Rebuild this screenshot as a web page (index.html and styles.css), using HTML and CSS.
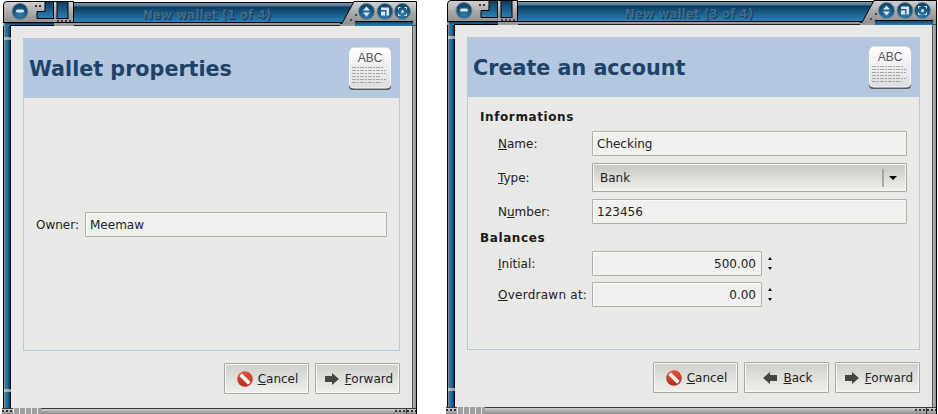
FILE: index.html
```html
<!DOCTYPE html>
<html lang="en">
<head>
    <meta charset="UTF-8">
    <meta name="viewport" content="width=device-width, initial-scale=1.0">
    <title>New wallet</title>
    <link rel="stylesheet" href="styles.css">
</head>
<body>
    <!-- Shared drawings: window corners, button icons, document icon -->
    <svg class="defs" aria-hidden="true">
        <defs>
            <linearGradient id="metal" x1="0" y1="0" x2="0" y2="1">
                <stop offset="0" stop-color="#d2d2d2"/>
                <stop offset="0.5" stop-color="#a6a6a6"/>
                <stop offset="1" stop-color="#8a8a8a"/>
            </linearGradient>
            <linearGradient id="steel" x1="0" y1="0" x2="0" y2="1">
                <stop offset="0" stop-color="#0b3a5e"/>
                <stop offset="1" stop-color="#2a82b8"/>
            </linearGradient>
            <radialGradient id="knob" cx="0.5" cy="0.75" r="0.8">
                <stop offset="0" stop-color="#2f7fb2"/>
                <stop offset="1" stop-color="#0a3556"/>
            </radialGradient>
            <linearGradient id="paper" x1="0" y1="0" x2="0" y2="1">
                <stop offset="0" stop-color="#ffffff"/>
                <stop offset="1" stop-color="#dcdcdc"/>
            </linearGradient>
            <linearGradient id="stop-red" x1="0" y1="0" x2="0" y2="1">
                <stop offset="0" stop-color="#e0523e"/>
                <stop offset="1" stop-color="#b82a1a"/>
            </linearGradient>
        </defs>

        <symbol id="corner-left" viewBox="0 0 72 25">
            <path d="M1.5 25V4Q1.5 .5 5 .5H71.5V25Z" fill="url(#metal)" stroke="#000"/>
            <rect x="1" y="22" width="71" height="3" fill="#9a9a9a"/>
            <rect x="2" y="21" width="70" height="1" fill="#000"/>
            <rect x="3" y="22" width="49" height="3" fill="url(#steel)"/>
            <rect x="8" y="24" width="44" height="1" fill="#000"/>
            <rect x="52" y="17" width="19" height="4" fill="#a0a0a0"/>
            <circle cx="18" cy="10.5" r="8" fill="url(#knob)" stroke="#6f8796"/>
            <rect x="14" y="8.5" width="8" height="3" rx="1.5" fill="#d8e4ec"/>
            <rect x="33" y="4" width="2" height="2" fill="#333"/>
            <rect x="37" y="4" width="2" height="2" fill="#333"/>
            <path d="M35 10.5H43V.5H51.5V17.5H35Z" fill="url(#steel)" stroke="#000"/>
            <rect x="55" y=".5" width="11" height="17" fill="url(#steel)" stroke="#000"/>
            <rect x="55" y="19" width="2" height="2" fill="#444"/>
            <rect x="59" y="19" width="2" height="2" fill="#444"/>
            <rect x="63" y="19" width="2" height="2" fill="#444"/>
            <rect x="67" y="19" width="2" height="2" fill="#444"/>
        </symbol>

        <symbol id="corner-right" viewBox="0 0 77 25">
            <path d="M0 22.5H2L14 .5H76.5V25H0Z" fill="url(#metal)" stroke="#000"/>
            <rect x="0" y="23" width="16" height="2" fill="#9a9a9a"/>
            <rect x="10" y="18" width="2" height="2" fill="#444"/>
            <rect x="15" y="13" width="2" height="2" fill="#444"/>
            <rect x="15" y="20" width="58" height="5" fill="url(#steel)"/>
            <rect x="15" y="20" width="58" height="1" fill="#000"/>
            <circle cx="26.5" cy="10.5" r="8" fill="url(#knob)" stroke="#6f8796"/>
            <path d="M26.5 5.5l3.5 4h-7zM26.5 15.5l3.5-4h-7z" fill="#d8e4ec"/>
            <circle cx="45" cy="10.5" r="8" fill="url(#knob)" stroke="#6f8796"/>
            <path d="M41 6.5h8v8h-2.500v-5.500h-5.500zM41 10.500h4v4h-4z" fill="#d8e4ec"/>
            <circle cx="62.5" cy="10.5" r="8" fill="url(#knob)" stroke="#6f8796"/>
            <path d="M58 6h2.500v1h-1.500v1.500h-1zM67 6v2.500h-1v-1.500h-1.500v-1zM58 15v-2.500h1v1.500h1.500v1zM67 15h-2.500v-1h1.500v-1.500h1z" fill="#d8e4ec"/>
            <circle cx="62.5" cy="10.5" r="1.500" fill="#d8e4ec"/>
        </symbol>

        <symbol id="icon-cancel" viewBox="0 0 16 16">
            <circle cx="8" cy="8" r="7.800" fill="url(#stop-red)"/>
            <path d="M3.600 3.600L12.400 12.400" stroke="#f2f0ee" stroke-width="3.800"/>
        </symbol>

        <symbol id="icon-forward" viewBox="0 0 16 16">
            <path d="M1 5H8V2L15 8L8 14V11H1Z" fill="#454545"/>
        </symbol>

        <symbol id="icon-back" viewBox="0 0 16 16">
            <path d="M15 5H8V2L1 8L8 14V11H15Z" fill="#454545"/>
        </symbol>

        <symbol id="icon-abc" viewBox="0 0 44 44">
            <rect x="1" y="1" width="42" height="42" rx="4" fill="#5a5a5a"/>
            <rect x="1.500" y="1" width="41" height="40" rx="4" fill="url(#paper)" stroke="#f8f8f8"/>
            <path d="M4 20.500H35M4 23.500H38M4 26.500H38M4 29.500H33M4 32.500H38M4 35.500H34" stroke="#8a8a8a" stroke-width="0.700" stroke-dasharray="4 1 2 1"/>
        </symbol>
    </svg>

    <div class="desktop">
        <div class="window window-first">
            <div class="titlebar">
                <svg class="corner-left"><use href="#corner-left"/></svg>
                <div class="title title-bg">New wallet (1 of 4)</div>
                <svg class="corner-right title-bg"><use href="#corner-right"/></svg>
            </div>
            <div class="middle">
                <div class="frame-left">
                    <div class="rail rail-top"></div>
                    <div class="grip"></div>
                    <div class="rail rail-long"></div>
                    <div class="grip"></div>
                    <div class="rail rail-end"></div>
                </div>
                <div class="content">
                    <div class="panel">
                        <div class="panel-head">
                            <h1>Wallet properties</h1>
                            <svg class="abc" viewBox="0 0 44 44"><use href="#icon-abc"/><text x="22" y="15" class="abc-text">ABC</text></svg>
                        </div>
                        <div class="panel-body owner-body">
                            <div class="owner-row">
                                <span class="owner-label">Owner:</span>
                                <div class="entry entry-grow">Meemaw</div>
                            </div>
                        </div>
                    </div>
                    <div class="buttons">
                        <div class="button"><svg class="icon"><use href="#icon-cancel"/></svg><span><u>C</u>ancel</span></div>
                        <div class="button"><svg class="icon"><use href="#icon-forward"/></svg><span><u>F</u>orward</span></div>
                    </div>
                </div>
                <div class="frame-right"></div>
            </div>
            <div class="bottom">
                <div class="dots"></div>
                <div class="ridges"></div>
                <div class="bottom-fill"></div>
                <div class="dots"></div>
                <div class="dots dots-end"></div>
            </div>
        </div>

        <div class="window window-second">
            <div class="titlebar">
                <svg class="corner-left"><use href="#corner-left"/></svg>
                <div class="title title-bg">New wallet (3 of 4)</div>
                <svg class="corner-right title-bg"><use href="#corner-right"/></svg>
            </div>
            <div class="middle">
                <div class="frame-left">
                    <div class="rail rail-top"></div>
                    <div class="grip"></div>
                    <div class="rail rail-long"></div>
                    <div class="grip"></div>
                    <div class="rail rail-end"></div>
                </div>
                <div class="content">
                    <div class="panel">
                        <div class="panel-head">
                            <h1>Create an account</h1>
                            <svg class="abc" viewBox="0 0 44 44"><use href="#icon-abc"/><text x="22" y="15" class="abc-text">ABC</text></svg>
                        </div>
                        <div class="panel-body account-body">
                            <h2>Informations</h2>
                            <div class="form-row">
                                <label><u>N</u>ame:</label>
                                <div class="entry entry-grow">Checking</div>
                            </div>
                            <div class="form-row">
                                <label><u>T</u>ype:</label>
                                <div class="combo">
                                    <span class="combo-text">Bank</span>
                                    <span class="combo-sep"></span>
                                    <span class="combo-arrow"></span>
                                </div>
                            </div>
                            <div class="form-row">
                                <label>N<u>u</u>mber:</label>
                                <div class="entry entry-grow">123456</div>
                            </div>
                            <h2 class="second-heading">Balances</h2>
                            <div class="form-row spin-row">
                                <label><u>I</u>nitial:</label>
                                <div class="entry entry-number">500.00</div>
                                <div class="spin"><span class="spin-up"></span><span class="spin-down"></span></div>
                            </div>
                            <div class="form-row spin-row">
                                <label class="label-wide"><u>O</u>verdrawn at:</label>
                                <div class="entry entry-number">0.00</div>
                                <div class="spin"><span class="spin-up"></span><span class="spin-down"></span></div>
                            </div>
                        </div>
                    </div>
                    <div class="buttons">
                        <div class="button"><svg class="icon"><use href="#icon-cancel"/></svg><span><u>C</u>ancel</span></div>
                        <div class="button"><svg class="icon"><use href="#icon-back"/></svg><span><u>B</u>ack</span></div>
                        <div class="button"><svg class="icon"><use href="#icon-forward"/></svg><span><u>F</u>orward</span></div>
                    </div>
                </div>
                <div class="frame-right"></div>
            </div>
            <div class="bottom">
                <div class="dots"></div>
                <div class="ridges"></div>
                <div class="bottom-fill"></div>
                <div class="dots"></div>
                <div class="dots dots-end"></div>
            </div>
        </div>
    </div>
</body>
</html>
```

FILE: styles.css
```css
body {
    margin: 0;
    background-color: #ffffff;
    font-family: "DejaVu Sans", sans-serif;
    font-size: 12px;
    color: #222222;
    overflow: hidden;
    height: 414px;
}

.defs {
    display: block;
    width: 0;
    height: 0;
}

.desktop {
    display: flex;
    align-items: flex-start;
    gap: 29px;
    padding-left: 2px;
}

.window {
    display: flex;
    flex-direction: column;
    flex: none;
}

.window-first {
    width: 415px;
    height: 413px;
    margin-top: 1px;
}

.window-second {
    width: 491px;
    height: 414px;
}

/* Title bar */
.titlebar {
    display: flex;
    height: 25px;
    flex: none;
}

.corner-left {
    width: 72px;
    height: 25px;
    flex: none;
}

.corner-right {
    width: 77px;
    height: 25px;
    flex: none;
}

.title-bg {
    background: linear-gradient(to bottom,
        #ffffff 0, #ffffff 1px,
        #000000 1px, #000000 2px,
        #7d98ad 2px, #4d7896 5px,
        #0b3a5e 6px, #2a82b8 21px,
        #000000 21px, #000000 22px,
        #9a9a9a 22px, #9a9a9a 24px,
        #222222 24px, #222222 25px);
}

.title {
    flex: 1;
    height: 25px;
    line-height: 23px;
    text-align: center;
    padding-top: 3px;
    box-sizing: border-box;
    font-weight: bold;
    color: #3f6a8c;
    text-shadow: 1px 1px 0 #103a58;
}

/* Frame */
.middle {
    display: flex;
    height: 382px;
    flex: none;
}

.frame-left {
    display: flex;
    flex-direction: column;
    width: 9px;
    flex: none;
}

.rail {
    background: linear-gradient(to right,
        #ffffff 0, #ffffff 1px,
        #000000 1px, #000000 2px,
        #8a8a8a 2px, #8a8a8a 3px,
        #2a82b8 3px, #1a6496 6px, #0b3a5e 8px,
        #000000 8px, #000000 9px);
}

.rail-top {
    height: 11px;
}

.rail-long {
    flex: 1;
}

.rail-end {
    height: 16px;
}

.grip {
    height: 3px;
    background: linear-gradient(to right,
        #ffffff 0, #ffffff 1px,
        #000000 1px, #000000 2px,
        #c8c8c8 2px, #909090 9px);
}

.frame-right {
    width: 5px;
    flex: none;
    background: linear-gradient(to right,
        #555555 0, #555555 1px,
        #b8b8b8 1px, #8e8e8e 4px,
        #000000 4px, #000000 5px);
}

.content {
    flex: 1;
    display: flex;
    flex-direction: column;
    background-color: #e8e8e6;
    padding: 12px 12px 14px;
    min-width: 0;
}

.panel {
    flex: 1;
    display: flex;
    flex-direction: column;
    border: 1px solid #b3c8df;
    border-top: none;
    margin-bottom: 12px;
}

.panel-head {
    display: flex;
    align-items: center;
    justify-content: space-between;
    height: 60px;
    padding: 0 8px 0 6px;
    margin: 0 -1px;
    background-color: #b3c8df;
}

h1 {
    margin: 1px 0 0;
    font-size: 20.7px;
    font-weight: bold;
    color: #1f4268;
}

.abc {
    width: 44px;
    height: 44px;
    margin-top: 1px;
}

.abc-text {
    font-family: "Liberation Sans", sans-serif;
    font-size: 12px;
    fill: #555555;
    text-anchor: middle;
}

.panel-body {
    flex: 1;
}

/* First window */
.owner-body {
    display: flex;
    align-items: center;
    padding: 0 12px;
}

.owner-row {
    display: flex;
    align-items: center;
    gap: 6px;
    flex: 1;
}

.owner-label {
    padding-top: 2px;
}

/* Second window */
.account-body {
    padding: 13px 12px 0;
}

h2 {
    margin: 0 0 6px;
    height: 15px;
    line-height: 15px;
    font-size: 12px;
    font-weight: bold;
    letter-spacing: 0.6px;
    color: #1a1a1a;
}

.second-heading {
    margin-bottom: 5px;
}

.form-row {
    display: flex;
    align-items: center;
    margin-bottom: 7px;
}

.spin-row {
    margin-bottom: 6px;
}

.form-row label {
    width: 94px;
    margin-left: 18px;
    flex: none;
    white-space: nowrap;
}

.form-row .label-wide {
    letter-spacing: 0.25px;
}

.entry {
    height: 25px;
    box-sizing: border-box;
    border: 1px solid #b0b0a8;
    border-radius: 1px;
    background-color: #f0f0ef;
    box-shadow: inset 1px 1px 0 #fafafa;
    padding: 1px 4px 0;
    line-height: 23px;
    color: #222222;
}

.entry-grow {
    flex: 1;
}

.entry-number {
    width: 170px;
    text-align: right;
    padding-right: 5px;
}

.combo {
    flex: 1;
    display: flex;
    align-items: center;
    height: 29px;
    box-sizing: border-box;
    border: 1px solid #a8a8a0;
    border-radius: 1px;
    background: linear-gradient(to bottom, #c6c6c2, #f0f0ee);
    box-shadow: inset 0 0 0 1px #f4f4f2;
    padding: 0 9px 0 7px;
}

.combo-text {
    flex: 1;
}

.combo-sep {
    width: 2px;
    height: 18px;
    background-color: #a8a8a0;
    margin-right: 5px;
}

.combo-arrow {
    width: 0;
    height: 0;
    border-left: 4px solid transparent;
    border-right: 4px solid transparent;
    border-top: 4px solid #000000;
}

.spin {
    display: flex;
    flex-direction: column;
    align-items: center;
    gap: 7px;
    margin-left: 3px;
    width: 9px;
}

.spin-up,
.spin-down {
    width: 0;
    height: 0;
    border-left: 2.500px solid transparent;
    border-right: 2.500px solid transparent;
}

.spin-up {
    border-bottom: 3px solid #111111;
}

.spin-down {
    border-top: 3px solid #111111;
}

/* Buttons */
.buttons {
    display: flex;
    justify-content: flex-end;
    gap: 6px;
}

.button {
    display: flex;
    align-items: center;
    justify-content: center;
    gap: 5px;
    width: 85px;
    height: 31px;
    box-sizing: border-box;
    padding-left: 2px;
    border: 1px solid #a8a8a0;
    border-radius: 1px;
    background: linear-gradient(to bottom, #cfcfcb, #efefed);
    box-shadow: inset 0 0 0 1px #f6f6f4;
}

.icon {
    width: 16px;
    height: 16px;
    flex: none;
}

/* Bottom bar */
.bottom {
    display: flex;
    flex: 1;
    background: linear-gradient(to bottom, #3a3a3a 0, #3a3a3a 1px, #cfcfcf 1px, #8a8a8a 100%);
}

.dots {
    width: 11px;
    flex: none;
    background-image: radial-gradient(#333333 1px, transparent 1px);
    background-size: 4px 6px;
    background-position: 3px 0;
}

.ridges {
    width: 28px;
    flex: none;
    background: repeating-linear-gradient(to right, #e8e8e8 0, #e8e8e8 1px, #a0a0a0 1px, #a0a0a0 6px);
}

.bottom-fill {
    flex: 1;
}

.dots-end {
    border-left: 1px solid #333333;
    border-right: 1px solid #000000;
    width: 9px;
}
```
